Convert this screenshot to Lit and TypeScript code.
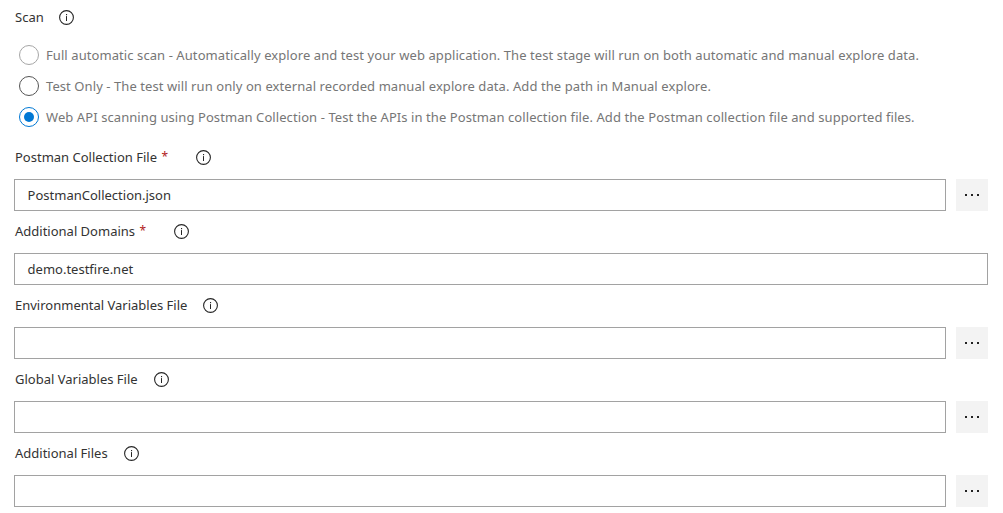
import { LitElement, html, css, svg, nothing } from "lit";
import { customElement, property } from "lit/decorators.js";

@customElement("info-icon")
class InfoIcon extends LitElement {
  static styles = css`
    :host { display: block; width: 15px; height: 15px; flex: none; padding-top: 1px; }
    .icon { display: block; }
  `;
  render() {
    return html`<svg class="icon" width="15" height="15" viewBox="0 0 15 15">
      ${svg`<circle cx="7.5" cy="7.5" r="6.9" fill="none" stroke="#262626" stroke-width="1.1"></circle>
      <rect x="7" y="4" width="1.1" height="1.2" fill="#262626"></rect>
      <rect x="7" y="6.1" width="1" height="4.9" fill="#262626"></rect>`}
    </svg>`;
  }
}

@customElement("radio-option")
class RadioOption extends LitElement {
  @property() label = "";
  @property() state = "";
  static styles = css`
    :host { display: flex; align-items: center; height: 31px; gap: 7px; }
    .ring {
      box-sizing: border-box; width: 20px; height: 20px; flex: none;
      border: 1px solid #555; border-radius: 50%;
      display: flex; align-items: center; justify-content: center;
    }
    .ring.muted { border-color: #a6a6a6; }
    .ring.checked { border-color: #0078d4; }
    .dot { width: 10px; height: 10px; border-radius: 50%; background: #0078d4; }
    .text { color: #767676; white-space: nowrap; line-height: 20px; letter-spacing: 0.08px; }
  `;
  render() {
    return html`<span class="ring ${this.state}">
        ${this.state === "checked" ? html`<span class="dot"></span>` : nothing}
      </span><span class="text">${this.label}</span>`;
  }
}

@customElement("form-field")
class FormField extends LitElement {
  @property() label = "";
  @property() value = "";
  @property({ type: Boolean }) required = false;
  @property({ type: Boolean }) browse = false;
  static styles = css`
    :host { display: block; height: 74px; }
    .head { display: flex; align-items: center; height: 20px; padding-left: 1px; color: #333; white-space: nowrap; }
    .star { color: #b0201c; margin-left: 4.5px; width: 12px; font-size: 12px; padding-bottom: 1px; }
    info-icon { margin-left: 15.9px; }
    .required { margin-left: 22.9px; }
    .row { display: flex; gap: 10px; margin-top: 12px; }
    .box {
      box-sizing: border-box; flex: 1; height: 32px; border: 1px solid #a2a2a2;
      padding: 0 12.6px; line-height: 30px; color: #333; background: #fff;
    }
    .browse {
      width: 32px; height: 32px; background: #f3f3f3; flex: none;
      display: flex; align-items: center; justify-content: center; gap: 4px;
    }
    .pip { width: 2px; height: 2px; background: #222; }
  `;
  render() {
    return html`<div class="head">
        <span>${this.label}</span>
        ${this.required ? html`<span class="star">*</span>` : nothing}
        <info-icon class=${this.required ? "required" : ""}></info-icon>
      </div>
      <div class="row">
        <div class="box">${this.value}</div>
        ${this.browse
          ? html`<div class="browse"><span class="pip"></span><span class="pip"></span><span class="pip"></span></div>`
          : nothing}
      </div>`;
  }
}

@customElement("app-root")
class AppRoot extends LitElement {
  static styles = css`
    :host {
      display: block; box-sizing: border-box; height: 513px; overflow: hidden;
      padding: 7px 15px 0 14px; background: #fff;
      font: 13px "Noto Sans", "Open Sans", sans-serif; letter-spacing: 0;
    }
    .title { display: flex; align-items: center; gap: 15.5px; height: 20px; padding-left: 1px; color: #333; }
    .options { padding: 12px 0 0 5px; }
    .fields { padding-top: 15px; }
  `;
  render() {
    return html`
      <div class="title"><span>Scan</span><info-icon></info-icon></div>
      <div class="options">
        <radio-option state="muted" label="Full automatic scan - Automatically explore and test your web application. The test stage will run on both automatic and manual explore data."></radio-option>
        <radio-option label="Test Only - The test will run only on external recorded manual explore data. Add the path in Manual explore."></radio-option>
        <radio-option state="checked" label="Web API scanning using Postman Collection - Test the APIs in the Postman collection file. Add the Postman collection file and supported files."></radio-option>
      </div>
      <div class="fields">
        <form-field required browse label="Postman Collection File" value="PostmanCollection.json"></form-field>
        <form-field required label="Additional Domains" value="demo.testfire.net"></form-field>
        <form-field browse label="Environmental Variables File"></form-field>
        <form-field browse label="Global Variables File"></form-field>
        <form-field browse label="Additional Files"></form-field>
      </div>
    `;
  }
}
